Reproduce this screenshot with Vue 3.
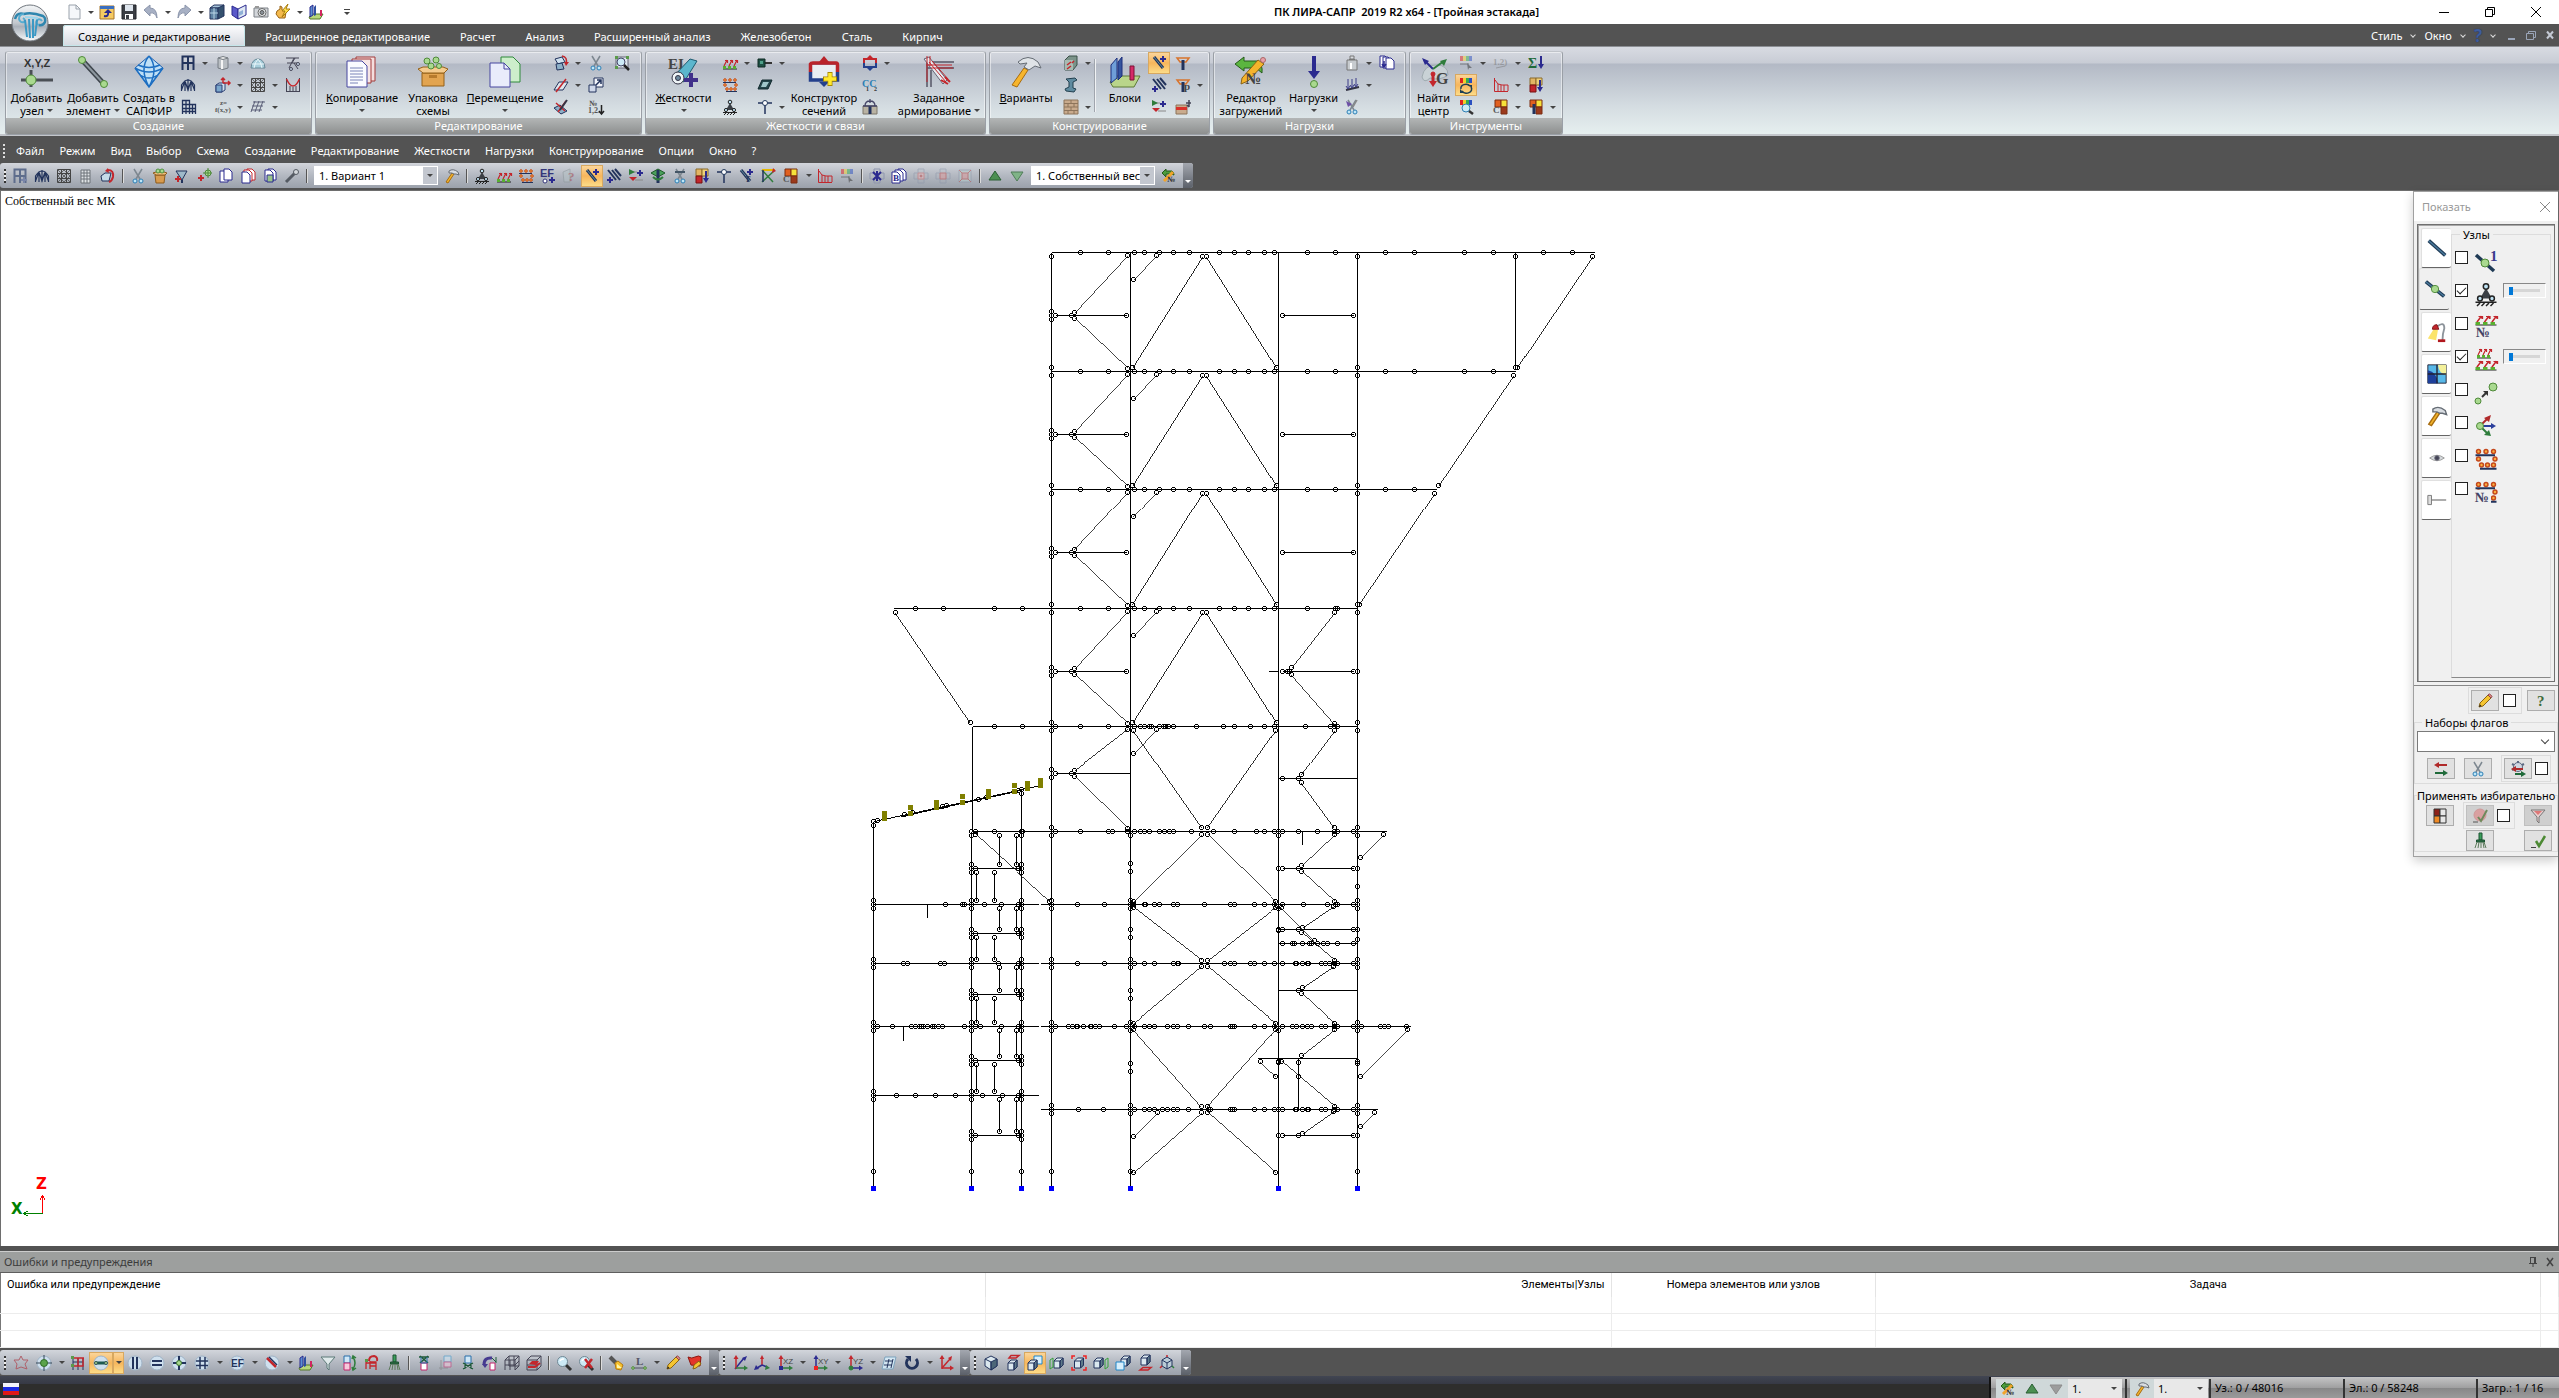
<template>
  <div class="app">
    <header class="titlebar">
      <div class="quick">
        <template v-for="(t, i) in quick" :key="i">
          <button class="tool" :title="t.id"><svg class="ico" viewBox="0 0 16 16" v-html="icons[t.id]"></svg></button>
          <button v-if="t.dd" class="dd" aria-label="Список"><i class="tri"></i></button>
        </template>
        <button class="dd more" aria-label="Настройка"><i class="bar"></i><i class="tri"></i></button>
      </div>
      <h1>ПК ЛИРА-САПР&nbsp; 2019 R2 x64 - [Тройная эстакада]</h1>
      <div class="winbtns">
        <button v-for="w in ['winMin', 'winMax', 'winClose']" :key="w" :aria-label="w">
          <svg class="ico" viewBox="0 0 16 16" v-html="icons[w]"></svg>
        </button>
      </div>
    </header>

    <button class="logo" aria-label="Меню">
      <svg viewBox="0 0 38 38">
        <defs>
          <linearGradient id="orb" x1="0" y1="0" x2="0" y2="1">
            <stop offset="0" stop-color="#f4f6f8" /><stop offset=".5" stop-color="#c3c8ce" />
            <stop offset=".6" stop-color="#aab1ba" /><stop offset="1" stop-color="#f8fafb" />
          </linearGradient>
        </defs>
        <circle cx="19" cy="19" r="18" fill="url(#orb)" stroke="#70767d" />
        <path d="M4 15Q6 8 13 10Q21 8 32 12Q35 14 34 18Q32 22 28 21" fill="none" stroke="#2f86ae" stroke-width="2.5" />
        <path d="M13 10Q8 10 8 15Q9 19 13 18Q15 16 12 14M28 21Q24 20 26 16Q29 14 31 17" fill="none" stroke="#56acd0" stroke-width="2" />
        <path d="M14 16L16 33M18 15L19 34M22 15L22 34M26 16L24 32" stroke="#3b98c4" stroke-width="2" />
        <path d="M14 13L27 14" stroke="#9ad6ec" stroke-width="2" />
      </svg>
    </button>

    <nav class="tabs">
      <button v-for="(t, i) in tabs" :key="t" :class="{ on: i === 0 }">{{ t }}</button>
      <div class="tabs-right">
        <button>Стиль <i class="chev"></i></button>
        <button>Окно <i class="chev wide"></i></button>
        <button class="help"><b>?</b> <i class="chev"></i></button>
        <button class="mdi" aria-label="Свернуть"><svg class="ico" viewBox="0 0 16 16" v-html="icons.mdiMin"></svg></button>
        <button class="mdi" aria-label="Восстановить"><svg class="ico" viewBox="0 0 16 16" v-html="icons.mdiMax"></svg></button>
        <button class="mdi" aria-label="Закрыть"><svg class="ico" viewBox="0 0 16 16" v-html="icons.mdiClose"></svg></button>
      </div>
    </nav>

    <div class="ribbon">
      <section v-for="g in groups" :key="g.name" class="group">
        <div class="group-body">
          <template v-for="(it, i) in g.items" :key="i">
            <i v-if="it.sep" class="gsep"></i>
            <button v-else-if="it.big" class="big" :style="{ width: it.w + 'px' }">
              <svg viewBox="0 0 32 32" v-html="icons[it.big]"></svg>
              <span v-for="(l, k) in it.text" :key="k"><u v-if="it.key && !k">{{ l[0] }}</u>{{ it.key && !k ? l.slice(1) : l }}<i v-if="it.dd === 'in' && k === it.text.length - 1" class="tri in"></i></span>
              <i v-if="it.dd === 'under'" class="tri under"></i>
            </button>
            <div v-else class="small" :style="{ gridTemplateColumns: it.cols.map(c => c + 'px').join(' ') }">
              <div v-for="(t, k) in it.tools" :key="k" class="cell">
                <button v-if="t.id" class="tool" :class="{ on: t.on, off: t.off }" :title="t.id">
                  <svg class="ico" viewBox="0 0 16 16" v-html="icons[t.id]"></svg>
                </button>
                <button v-if="t.dd" class="dd" aria-label="Список"><i class="tri"></i></button>
              </div>
            </div>
          </template>
        </div>
        <footer>{{ g.name }}</footer>
      </section>
    </div>

    <nav class="menubar">
      <i class="grip"></i>
      <button v-for="m in menus" :key="m">{{ m }}</button>
    </nav>

    <div class="bars">
      <div class="bar-strip">
        <i class="grip dark"></i>
        <template v-for="(t, i) in mainBar" :key="i">
          <i v-if="t.id === '|'" class="sep"></i>
          <span v-else-if="t.select" class="pick">
            <select :aria-label="t.select"><option>{{ t.select }}</option></select><i class="tri"></i>
          </span>
          <template v-else>
            <button class="tool" :class="{ on: t.on, off: t.off, split: t.dd }" :title="t.id">
              <svg class="ico" viewBox="0 0 16 16" v-html="icons[t.id]"></svg>
            </button>
            <button v-if="t.dd" class="dd" aria-label="Список"><i class="tri"></i></button>
          </template>
        </template>
        <i class="tail"><i class="tri"></i></i>
      </div>
    </div>

    <main class="canvas">
      <svg class="model" viewBox="1 191 2557 1053" preserveAspectRatio="xMinYMin meet" shape-rendering="crispEdges">
        <g transform="translate(.5 .5)" fill="none" stroke="#000">
          <line v-for="(l, i) in model.lines" :key="'l' + i" :x1="l[0]" :y1="l[1]" :x2="l[2]" :y2="l[3]" :stroke-width="thin(l)" />
          <circle v-for="(n, i) in model.nodes" :key="'n' + i" :cx="n[0]" :cy="n[1]" r="2" />
        </g>
        <rect v-for="(b, i) in model.loads" :key="'b' + i" :x="b[0]" :y="b[1]" width="5" :height="b[2]" fill="#808000" />
        <rect v-for="x in model.supports" :key="'s' + x" :x="x - 2" y="1186" width="5" height="5" fill="#00f" />
        <g fill="none" transform="translate(.5 .5)">
          <path d="M42 1213V1195M39 1200L42 1195L45 1200" stroke="red" />
          <path d="M42 1213H23M28 1210L23 1213L28 1216" stroke="green" />
        </g>
        <text x="36" y="1189" class="axis" fill="red">Z</text>
        <text x="11" y="1214" class="axis" fill="green">X</text>
      </svg>
      <span class="loadcase">Собственный вес МК</span>

      <aside class="panel">
        <header>Показать<button aria-label="Закрыть"><svg class="ico" viewBox="0 0 16 16"><path d="M3 3L13 13M13 3L3 13" stroke="#888" fill="none" /></svg></button></header>
        <div class="flags">
          <div class="side">
            <button v-for="(s, i) in sideTabs" :key="s" :class="{ on: i === 1 }" :title="s">
              <svg viewBox="0 0 24 24" v-html="icons[s]"></svg>
            </button>
          </div>
          <fieldset class="nodes">
            <legend>Узлы</legend>
            <div v-for="f in flags" :key="f.id" class="flag">
              <input :id="f.id" type="checkbox" v-model="f.on" />
              <label :for="f.id"><svg viewBox="0 0 24 24" v-html="icons[f.id]"></svg></label>
              <input v-if="f.slider" type="range" min="0" max="100" value="0" :aria-label="f.id" />
            </div>
          </fieldset>
        </div>
        <div class="prow top">
          <div class="box"><button class="pb"><svg viewBox="0 0 16 16" v-html="icons.pencil"></svg></button><input type="checkbox" aria-label="Правка" /></div>
          <button class="pb"><svg viewBox="0 0 16 16" v-html="icons.ask"></svg></button>
        </div>
        <fieldset class="sets">
          <legend>Наборы флагов</legend>
          <span class="combo"><select aria-label="Наборы флагов"><option></option></select><i class="chev ink"></i></span>
          <div class="prow">
            <button class="pb"><svg viewBox="0 0 16 16" v-html="icons.swap"></svg></button>
            <button class="pb"><svg viewBox="0 0 16 16" v-html="icons.cut"></svg></button>
            <div class="box"><button class="pb"><svg viewBox="0 0 16 16" v-html="icons.gearSwap"></svg></button><input type="checkbox" aria-label="Авто" /></div>
          </div>
        </fieldset>
        <fieldset class="apply">
          <legend>Применять избирательно</legend>
          <div class="agrid">
            <button class="pb"><svg viewBox="0 0 16 16" v-html="icons.tiles"></svg></button>
            <div class="box"><button class="pb dim"><svg viewBox="0 0 16 16" v-html="icons.redCheck"></svg></button><input type="checkbox" aria-label="Применять" /></div>
            <button class="pb dim"><svg viewBox="0 0 16 16" v-html="icons.funnelRed"></svg></button>
            <span></span>
            <button class="pb"><svg viewBox="0 0 16 16" v-html="icons.brush"></svg></button>
            <button class="pb"><svg viewBox="0 0 16 16" v-html="icons.check"></svg></button>
          </div>
        </fieldset>
      </aside>
    </main>

    <section class="errors">
      <header>
        <span>Ошибки и предупреждения</span>
        <button aria-label="Закрепить"><svg class="ico" viewBox="0 0 16 16"><path d="M5.5 3V9M10.5 3V9M5.5 3.5H10.5M9.5 3V9M4 9.5H12M8 9.5V13" stroke="#444" fill="none" /></svg></button>
        <button aria-label="Закрыть"><svg class="ico" viewBox="0 0 16 16"><path d="M5 4L11 12M11 4L5 12" stroke="#444" stroke-width="1.5" fill="none" /></svg></button>
      </header>
      <table>
        <colgroup><col class="c1" /><col class="c2" /><col class="c3" /><col class="c4" /><col /></colgroup>
        <thead>
          <tr><th class="l">Ошибка или предупреждение</th><th class="r">Элементы|Узлы</th><th>Номера элементов или узлов</th><th>Задача</th><th></th></tr>
        </thead>
        <tbody>
          <tr v-for="n in 3" :key="n"><td v-for="k in 5" :key="k"></td></tr>
        </tbody>
      </table>
    </section>

    <div class="bars bottom">
      <div v-for="(b, j) in bottomBars" :key="j" class="bar-strip">
        <i class="grip dark"></i>
        <template v-for="(t, i) in b" :key="i">
          <i v-if="t.id === '|'" class="sep"></i>
          <template v-else>
            <button class="tool" :class="{ on: t.on, off: t.off, split: t.dd }" :title="t.id">
              <svg class="ico" viewBox="0 0 16 16" v-html="icons[t.id]"></svg>
            </button>
            <button v-if="t.dd" class="dd" :class="{ on: t.on }" aria-label="Список"><i class="tri"></i></button>
          </template>
        </template>
        <i class="tail"><i class="tri"></i></i>
      </div>
    </div>

    <footer class="status">
      <svg class="flag-ru" viewBox="0 0 16 12"><path d="M0 0H16V4H0Z" fill="#f4f4fa" /><path d="M0 4H16V8H0Z" fill="#1c2be0" /><path d="M0 8H16V12H0Z" fill="#e01818" /></svg>
      <div class="cells">
        <button v-for="s in ['loadEdit', 'up', 'downGray']" :key="s" :title="s"><svg class="ico" viewBox="0 0 16 16" v-html="icons[s]"></svg></button>
        <span class="pick"><select aria-label="Загружение"><option>1.</option></select><i class="tri"></i></span>
        <i class="cut"></i>
        <button title="Вариант"><svg class="ico" viewBox="0 0 16 16" v-html="icons.hammer"></svg></button>
        <span class="pick"><select aria-label="Вариант"><option>1.</option></select><i class="tri"></i></span>
        <span class="info">Уз.: 0 / 48016</span>
        <span class="info">Эл.: 0 / 58248</span>
        <span class="info last">Загр.: 1 / 16</span>
      </div>
    </footer>
  </div>
</template>

<script setup>
import { reactive } from 'vue'

// svg helpers: s - stroked path, f - filled path, c - circle, t - label
const s = (d, col = '#22395c', w = 1) => `<path d="${d}" fill="none" stroke="${col}" stroke-width="${w}"/>`
const f = (d, col, st) => `<path d="${d}" fill="${col}"${st ? ` stroke="${st}"` : ''}/>`
const c = (x, y, r, col = 'none', st = '#22395c') => `<circle cx="${x}" cy="${y}" r="${r}" fill="${col}" stroke="${st}"/>`
const t = (x, y, txt, size, col = '#333', fam = 'Liberation Serif', w = 'bold') =>
  `<text x="${x}" y="${y}" font-size="${size}" fill="${col}" font-family="${fam}, serif" font-weight="${w}">${txt}</text>`
const g = (tr, body) => `<g transform="${tr}">${body}</g>`

const NAVY = '#22335c', BLUE = '#2b2a8f', RED = '#c3262c', GRN = '#2f7d3c', LG = '#a9d98f'
const plus = (x, y, col = BLUE) => s(`M${x - 3} ${y}H${x + 3}M${x} ${y - 3}V${y + 3}`, col, 2)
const page = (x, y, col = BLUE) => f(`M${x} ${y}h5l3 3v8h-8z`, '#fff', col)
const cut = s('M4 1L10 11M12 1L6 11', '#7d8790', 1.5) + c(5, 13, 2, '#bfe6f7', '#2d7fb5') + c(11, 13, 2, '#bfe6f7', '#2d7fb5')
const pencil = f('M2 14L3 10L11 2L14 5L6 13Z', '#f5c531', '#8a6314') + f('M11 2L12.5 .8L15 3.3L14 5Z', '#e58b8b', '#8d4646') + f('M2 14L3 11.5L4.5 13Z', '#222')
const hammer = f('M2 14L8 5L10 6L4 15Z', '#f2b32b', '#a76c10') + f('M5 3Q9 0 14 4L15 7L12 6L10 6L8 5L5 5Z', '#d9dde2', '#666d75')
const disc = body => c(8, 8, 7, '#cfe0ee', '#9fb3c6') + body
const frame = (col = NAVY) => s('M2.5 15V1.5H13.5V15M2.5 8H13.5M8 1.5V15', col, 2)
const arch = s('M1.5 14V8Q8 -2 14.5 8V14M5 14V4L1.5 13M5 4L8 13L11 4V14M11 4L14.5 13M8 2V14', NAVY, 1.2)
const mesh = s('M1.5 1.5H14.5V14.5H1.5ZM1 5.5H15M1 10.5H15M5.5 1V15M10.5 1V15', '#444') + s('M2 2L14 14M14 2L2 14M8 2L2 8L8 14L14 8Z', '#444', .7)
const parcel = f('M3 7H13L12 15H4Z', '#d89b4e', '#8d5c1f') + f('M1 5L4 7H13L15 5L12 4H4Z', '#eebd7c', '#8d5c1f') + c(6, 3, 2, LG, '#4f9140') + c(10, 3, 2, LG, '#4f9140')
const springs = s('M1 14H15', '#222') + f('M1 11h3v3h-3zM6 11h3v3h-3zM11 11h3v3h-3z', '#58b030') + s('M2 11L5 5M7 11L10 5M12 11L15 5M3 5.5H5.5V8M8 5.5H10.5V8M13 5.5H15.5V8', RED, 1.2)
const dot = (x, y) => c(x, y, 1.3, '#fbb040', '#c4481c')
const dots = [3, 8, 13].map(x => dot(x, 3)).join('') + [5, 9, 13].map(x => dot(x, 12)).join('') + dot(3, 8) + dot(14, 8) + s('M1 5.5H14M4 14.5H15', NAVY, 1.2)
const support = f('M8 4L4 11H12Z', '#3a3f45') + c(8, 3, 1.8, '#bfe2f3', '#222') + c(4, 11, 1.6, '#bfe2f3', '#222') + c(12, 11, 1.6, '#bfe2f3', '#222') + s('M1 13.5H15', '#222') + s('M2 16L4 14M5 16L7 14M8 16L10 14M11 16L13 14', '#222')
const wand = s('M3 2L12 13', NAVY, 3) + s('M3 2L12 13', '#5e8d9b', 1) + plus(12, 4)
const ropes = s('M2 2L10 12M6 2L14 12M9 1L15 8', NAVY, 2) + plus(4, 12)
const releases = s('M2 4H9M7 12H15', '#888') + f('M1 1L7 4L1 7Z', GRN) + f('M9 9H1L5 13Z', RED) + plus(12, 5)
const hinge = s('M1 4H15M8 6V15', NAVY, 1.5) + c(8, 4, 2.5, '#fff')
const tee = s('M2 3H14L11 7H5Z', '#d8742d', 1.5) + s('M8 5V15', NAVY, 3)
const palette = x => f(`M${x} 1h3v5h-3z`, '#d22') + f(`M${x + 3} 1h3v5h-3z`, '#f2cf2b') + f(`M${x + 6} 1h3v5h-3z`, '#36a852') + f(`M${x + 9} 1h3v5h-3z`, '#2a4fc0')
const quad = f('M2 1H8V8H2Z', '#e06020', '#7a2d10') + f('M8 1H14V8H8Z', '#f6e23a', '#7a2d10') + f('M8 8H14V15H8Z', '#9b3a1c', '#7a2d10')
const hist = s('M1.5 1V14.5H15', RED) + s('M2 3L5 7L9 8H15V14M5 7V14M8 8V14M11 8V14', RED)
const loadEdit = f('M1 5L5 1V3H11Q13 4 13 7L10 6H5V9Z', '#4c9c3c', '#255b1b') + s('M3 13L12 4', '#f1a42a', 3) + t(6, 14, '№', 8, '#333')
const tilesDown = f('M2 1H8V8H2Z', '#e3b564', '#8a6a2a') + f('M8 1H14V8H8Z', '#eed07a', '#8a6a2a') + f('M2 8H8V15H2Z', RED, '#711') + s('M12 3V12', BLUE, 2) + f('M9 10H15L12 15Z', BLUE)
const mag = s('M10 10L15 15', '#333', 3) + c(6.5, 6.5, 5, '#cdeaf6', '#6f8794') + s('M4 6Q5 3.5 8 4', '#fff', 1.5)
const box3 = (x, y) => f(`M${x} ${y + 3}l3-3h6v7l-3 3h-6z`, '#dbe8ef', NAVY) + f(`M${x + 6} ${y + 3}l3-3v7l-3 3z`, '#5d7a8a', NAVY) + s(`M${x} ${y + 3}h6v7`, NAVY)
const axes = (a, b, l) => s('M4 14V3', a, 1.5) + f('M4 0L1.5 4H6.5Z', a) + s('M4 13H13', b, 1.5) + f('M16 13L12 10.5V15.5Z', b) + (l ? t(6, 9, l, 8, '#444', 'Liberation Sans', 'normal') : '')
const ghost = (col, m) => s('M5 1H11V5H15V11H11V15H5V11H1V5H5Z', '#8a93a8', 1) + f('M5 5H11V11H5Z', m, col)

const icons = {
  new: f('M3 1H10L14 5V15H3Z', '#f5f7fa', '#9aa2ab') + s('M10 1V5H14', '#9aa2ab'),
  open: f('M1 2H15V15H1Z', '#f6ca62', '#a5752a') + f('M1 2H15V5H1Z', '#3a6fc0') + s('M5 12Q10 13 9 8', BLUE, 2) + f('M5 9H13L9 5Z', BLUE),
  save: f('M1 1H15V15H1Z', '#3b3e44', '#22252a') + f('M4 1H12V7H4Z', '#dfe6ee') + f('M4 10H12V15H4Z', '#fff') + f('M5 11H8V15H5Z', '#3b3e44'),
  undo: f('M1 6L7 1V4Q14 4 14 14Q12 8 7 9V12Z', '#a7b0c4', '#8b95ab'),
  redo: f('M15 6L9 1V4Q2 4 2 14Q4 8 9 9V12Z', '#a7b0c4', '#8b95ab'),
  cube3d: f('M1 4L5 1H15L11 4Z', '#a7c5da', NAVY) + f('M1 4H9V15H1Z', '#5e83a3', NAVY) + f('M9 4L15 1V12L9 15Z', '#34516f', NAVY) + s('M5 4V15M1 9H9', '#b9d5e6'),
  book: f('M1 2L7 5V15L1 11Z', '#5a59c9', BLUE) + f('M7 5L15 1V11L7 15Z', '#dfe8f4', BLUE) + f('M8 8L12 6V10L8 12Z', '#8fb0d6'),
  camera: f('M1 4H15V13H1Z', '#d3d6da', '#7c8187') + c(9, 8.5, 4, '#eef1f3', '#666') + c(9, 8.5, 2, '#8a9298', '#555') + f('M2 2H6V4H2Z', '#999'),
  bolt: f('M2 7L5 5V2L7 3V6L11 8L10 14H4L1 10Z', '#f4b94c', '#9a6516') + f('M13 0L7 7H10L7 13L15 5H11Z', '#ffe04a', '#a97c10'),
  columns: f('M1 13L5 10H15L12 15H2Z', '#b7d77a', '#56782a') + f('M2 3L5 1V11L2 13Z', '#5b8fd0', BLUE) + f('M6 3L8 1V11L6 12Z', '#2f4fa0') + f('M12 6H14V12H12Z', '#d22560'),
  winMin: s('M3 8.5H13', '#000'), winMax: s('M3.5 5.5H10.5V12.5H3.5ZM5.5 5V3.5H12.5V10.5H11', '#000'), winClose: s('M3 3L13 13M13 3L3 13', '#000'),
  mdiMin: s('M4 12H11', '#9aa5b8', 2), mdiMax: s('M3.5 6.5H10.5V12.5H3.5ZM5.5 6V4.5H12.5V10.5H11', '#9aa5b8'), mdiClose: s('M5 4.5L11 11.5M11 4.5L5 11.5', '#c3c9d4', 2),

  addNode: t(3, 11, 'X,Y,Z', 11, '#333', 'Liberation Sans') + s('M0 24H32', '#4a4f55', 3) + s('M10 14V31', '#4a4f55', 3) + c(10, 24, 5, LG, '#4f8a3a'),
  addElem: s('M5 4L27 28', '#3d444b', 5) + s('M5 4L27 28', '#8d979f', 2) + c(5, 4, 3.5, LG, '#4f8a3a') + c(27, 28, 3.5, LG, '#4f8a3a'),
  sapfir: f('M16 0L30 12L16 31L2 12Z', '#bfe0f7', '#1e5fae') + s('M2 12Q16 20 30 12M5 9Q16 14 27 9M16 0Q6 12 16 31M16 0Q26 12 16 31M7 19Q16 25 25 19M2 12L16 31L30 12', '#1e6fc2', 1.5),
  copyBig: f('M10 1H29V25H10Z', '#f4dede', '#a23b3b') + f('M6 3H25V27H6Z', '#f7e6e6', '#a23b3b') + f('M1 5H16L21 10V31H1Z', '#fafbff', '#4747a0') + s('M4 12H17M4 15H17M4 18H17M4 21H17M4 24H17M4 27H12', '#7a84b8'),
  packBig: f('M5 17H27V30H5Z', '#e2a450', '#946019') + f('M1 13L6 17H27L31 13L26 11H6Z', '#f5cb8d', '#946019') + c(10, 5, 3, LG, '#4f8a3a') + c(19, 4, 3, LG, '#4f8a3a') + c(14, 10, 3, LG, '#4f8a3a') + c(22, 10, 2.5, LG, '#4f8a3a') + f('M12 19H20V22H12Z', '#b77a2c'),
  moveBig: f('M12 1H24L31 8V26H12Z', '#cdeecb', '#2f8a3a') + f('M1 7H15L21 13V31H1Z', '#e9ecfb', '#4747a0') + s('M15 7V13H21', '#4747a0'),
  stiff: t(0, 13, 'EI', 15, '#444') + f('M6 20L22 3L29 5L16 26Z', '#5cb6cd', '#1f5b70') + c(10, 22, 6, '#eef4f7', '#334') + c(10, 22, 2.5, '#6d8aa0', '#334') + s('M23 17V31M16 24H30', '#40308a', 4),
  section: f('M3 8H29V24H3Z', '#e9edf2', '#2c3f8c') + s('M2.5 16V8Q3 7 5 7H28Q29.5 7 29.5 9V16', '#b9232a', 3.5) + s('M2.5 16V24H29.5V16', '#24408c', 3.5) + f('M11 6L16 0L21 6Z', '#b9232a') + f('M11 26H21L16 31Z', '#24408c') + s('M22 16V30M15 23H29', '#a88a00', 5) + s('M22 17V29M16 23H28', '#ffe92e', 3.5),
  rebarSet: s('M4 31V6H31M8 31V14M4 12H31', '#556', 1.5) + f('M1 3L6 1L24 24L20 28Z', '#e6e9ee', '#667') + s('M4 0V26M7 0V10M3 9H29M8 12H30', RED, 1) + s('M6 6L23 26M9 5L25 23', RED, 1) + s('M18 24L25 28M22 21L27 26', RED, 2),
  hammerBig: f('M2 29L14 12L18 14L7 31Z', '#f7b52c', '#a76c10') + f('M8 6Q18 -3 28 6L31 12L25 10L19 14L14 11L17 7L10 8Z', '#dfe3e7', '#666d75'),
  blocks: f('M1 26L8 20H31L25 31H4Z', '#b9d58a', '#5d7a36') + f('M2 9L8 2V22L2 27Z', '#6f9fd8', '#1d2f7c') + f('M9 6L13 1V20L9 24Z', '#35549e', '#1d2f7c') + f('M21 10H25V24H21Z', '#d52b68', '#7c1237'),
  loadEditBig: f('M0 8L9 1V5H22Q28 8 27 17L21 12H9V15Z', '#5bb53f', '#255b1b') + f('M6 28L7 22L23 4L29 8L13 25Z', '#f5b42b', '#8a6314') + c(28, 4, 2.5, '#e9a0a8', '#a66') + t(10, 28, '№', 16, '#444'),
  loads: s('M16 0V18', BLUE, 4) + f('M10 15H22L16 23Z', BLUE) + c(16, 28, 3.5, LG, '#4f8a3a'),
  centre: f('M4 21Q6 9 18 9Q30 9 30 19Q22 25 12 22Q6 28 4 21Z', '#c9d2d6', '#a0abb0') + s('M15 13L6 4', BLUE, 2) + f('M4 2L11 5L7 9Z', BLUE) + s('M15 13L26 5', GRN, 2) + f('M29 3L26 10L22 5Z', GRN) + s('M15 17V27', RED, 3) + f('M11 25H19L15 31Z', RED) + c(15, 18, 2, RED, RED) + t(18, 28, 'G', 16, '#444'),

  frame: frame(), arch, mesh, parcel, springs, dots, support, wand, ropes, releases, hinge, tee, hist, loadEdit, cut, pencil, hammer,
  tiles: f('M2 1H8V8H2Z', '#8d2018', '#333') + f('M8 1H14V8H8Z', '#e8e8e8', '#333') + f('M2 8H8V15H2Z', '#f08a24', '#333') + f('M8 8H14V15H8Z', '#e8e8e8', '#333'),
  building: s('M2.5 15V1.5H9.5V15M2.5 5.5H15.5V15M2.5 9.5H15M6 1V15M12.5 5V15M2 12.5H15', NAVY, 1.3),
  cylinder: f('M3 3V13Q8 16 13 13V3Z', '#b9bec3', '#777d84') + f('M3 3Q8 0 13 3Q8 6 3 3Z', '#eee', '#777d84') + f('M6 5H8V14H6Z', '#f4f4f4'),
  dome: f('M1 13Q2 4 8 4Q14 4 15 13Z', '#a9cfdc', '#688a98') + s('M4 13Q5 7 8 4Q11 7 12 13M2 9H14', '#e9f6fa'),
  truss: s('M1 3H14M2 8H12M4 13L9 3M7 8L10 3M9 8L13 14', '#445') + c(13, 9, 1.5, '#cde', '#445') + c(6, 14, 1.5, '#cde', '#445'),
  cubeMove: f('M1 8L4 6H10V13L7 15H1Z', '#cfe0ee', '#2b3f74') + f('M1 8H7V15H1Z', '#7ba7cc', '#2b3f74') + s('M8 6V1M8 6H15M6 3L8 1L10 3M13 4L15 6L13 8', RED, 1.5),
  fxy: t(5, 6, 'z=', 7, '#555') + t(0, 13, 'f(x,y)', 7, '#555'),
  cable: s('M1.5 1V15M14.5 1V15M1 14.5H15M5 9V14M8 10V14M11 9V14', '#445') + s('M1.5 2Q8 16 14.5 2', RED, 1.5),
  plane: s('M3 3H15M2 7H13M1 11H12M5 2L1 13M9 2L5 13M13 2L9 13', '#5b5f78'),
  rotate: f('M2 4L9 2L12 7L5 9Z', '#cfe0ee', NAVY) + f('M3 9L9 8L11 14L4 15Z', '#8db0c8', NAVY) + s('M9 1Q15 2 13 9', RED, 1.5) + f('M11 7H16L13 11Z', RED),
  mirror: f('M1 13L6 5H15L10 13Z', '#dfe7ee', NAVY) + s('M3 15L13 2', RED, 1.5),
  slice: f('M1 9L7 6L14 12L8 15Z', '#8db0c8', NAVY) + s('M13 2L5 13M3 4L12 12', RED, 1.5) + s('M14 1L7 11', '#334', 2),
  zoomNodes: f('M2 2H14V13H2Z', '#dfe7ee', '#667') + c(7, 7, 4, '#cdeaf6', '#446') + s('M10 10L15 15', '#222', 2.5) + f('M1 1h3v3h-3zM12 1h3v3h-3zM1 11h3v3h-3z', '#5b9a4a'),
  scale: f('M6 1H15V10H6Z', '#f2f4fa', NAVY) + f('M1 8H8V15H1Z', '#cfd8ea', NAVY) + s('M8 8L13 3M9 3H13V7', NAVY, 1.5),
  renum: t(1, 7, '№', 8, '#555') + t(0, 14, '1,2..', 8, '#555') + s('M13.5 6V14M11 12L13.5 15L16 12', '#222', 1.5),
  block: s('M7 8H15', '#333', 2) + f('M1 4H8V12H1Z', '#1e5145', '#0f2a24') + f('M3 6h3v3h-3z', '#4fa08a'),
  plate: f('M5 3H15L11 12H1Z', '#23454a', '#122a2e') + f('M6 5H12L9 10H4Z', '#9fc6c9'),
  rectSec: s('M2 8V4H14V8', RED, 2) + s('M2 8V12H14V8', '#24408c', 2) + f('M5 3L8 0L11 3Z', RED) + f('M5 13H11L8 16Z', '#24408c'),
  cc: t(0, 10, 'CC', 10, '#2c7fb5') + t(4, 14, '1', 6, '#333') + t(12, 14, '2', 6, '#333'),
  soil: f('M1 7H15V15H1Z', '#b9b3a3', '#7c776a') + s('M8 7V15', NAVY, 3) + s('M3 7Q3 2 8 2Q13 2 13 7M1 7H15M8 0V4', '#446', 1.3),
  rebarBox: f('M2 5L6 1H14V10L10 15H2Z', '#7b9389', '#3b5048') + f('M2 5H10V15H2Z', '#a7bbb2') + s('M4 10L8 7M4 14L8 11M9 8L11 6', RED, 1.5),
  ibeam: f('M3 2L12 1L14 3L10 5V11L13 12L11 15L3 14L2 12L6 10V5Z', '#5f8ba0', '#23404f'),
  brick: f('M1 1H15V15H1Z', '#c9ab8d', '#8d745b') + s('M1 4.5H15M1 8H15M1 11.5H15M8 1V4.5M5 4.5V8M11 4.5V8M8 8V11.5M5 11.5V15M11 11.5V15', '#8d745b'),
  teeP: tee + t(9, 13, 'p', 11, '#444'),
  brickLoad: f('M1 6H12V15H1Z', '#c9ab8d', '#8d745b') + f('M1 8H12V11H1Z', '#d8332c') + s('M14 1V8M11 4H16M14 8L12 6', '#445', 1.5),
  weight: f('M6 1H10V4H6Z', '#d8dbdf', '#777') + f('M3 5H13V15H3Z', '#c7cbcf', '#777') + f('M6 8H8V14H6Z', '#fff') + s('M5 4.5H11', '#777'),
  loadLine: s('M2 13L15 10', '#334', 2) + s('M4 2V11M8 2V10M12 1V9M2 9L4 12L6 9M6 8L8 11L10 8M10 7L12 10L14 7', '#3a3a88'),
  cutLoad: cut + f('M2 2L8 5L4 8Z', '#6d50a5') + s('M13 1L9 8', '#888', 1.5),
  copyLoad: page(1, 1) + page(4, 2) + page(7, 3) + s('M5 6V11M3 9L5 12L7 9', BLUE, 1.5),
  palPick: palette(2) + s('M2 9H11', '#333', 1) + f('M9 8L14 13L11 13L10 15Z', '#333'),
  palCycle: palette(2) + s('M3 12A5 4 0 0 1 12 9M13 10A5 4 0 0 1 4 14', '#1d3f55', 1.5) + f('M10 8H14V11ZM6 16H2V12Z', '#1d3f55'),
  palZoom: palette(2) + c(8, 9, 4, '#cdeaf6', '#2d7fb5') + s('M11 12L15 15', '#333', 2.5),
  frac: t(0, 10, '1.2)', 9, '#777') + s('M3 13L12 11', '#777'),
  sigma: t(0, 13, 'Σ', 14, '#1f6a3a') + s('M13 1V10', BLUE, 2) + f('M10 9H16L13 14Z', BLUE),
  tilesDown, tilesC: quad + t(0, 14, 'C', 9, '#555'), tilesPen: quad + s('M6 5V15', NAVY, 3),

  frameP: frame('#5e6d8c') + plus(12, 12, '#7a86a8'),
  cyl2: f('M3 2H12V15H3Z', '#dfe3e6', '#6c7278') + s('M3 5H12M3 8H12M3 11H12M6 2V15M9 2V15', '#6c7278'),
  unroll: f('M1 8L5 5H11L9 13H2Z', '#c6dbe8', NAVY) + s('M8 2Q14 2 13 9Q12 13 9 14', RED, 2) + f('M8 0L5 3L9 5Z', RED),
  triPlus: f('M2 3H13L8 12Z', '#9fb9c9', NAVY) + s('M8 12V15', NAVY, 2) + plus(4, 11, RED),
  nodePlus: c(12, 5, 3, LG, '#4f8a3a') + s('M12 0V10M7 5H16', '#4f8a3a') + plus(5, 10, RED),
  pages: page(2, 3) + page(6, 1), pagesR: page(7, 1, RED) + page(4, 2, RED) + page(2, 4),
  pagesM: page(6, 1) + page(3, 2) + f('M5 7h6v7h-6z', '#9ac48a', BLUE),
  wrench: s('M2 14L11 5', '#555b63', 3) + c(12, 4, 2.5, '#d4d8dc', '#555b63'),
  efp: t(0, 9, 'EF', 11, '#33367a', 'Liberation Sans') + c(5, 13, 2, '#fff', '#33367a') + plus(12, 12),
  ask2: f('M1 4L8 1V14H2Z', '#b6c2c6', '#8a9598') + t(6, 13, '?', 13, '#a3444c'),
  layers: f('M8 1L15 5L8 9L1 5Z', '#4aa05a', '#1e5a2a') + s('M8 2V15', NAVY, 3) + s('M3 9Q8 14 13 9', GRN, 2),
  cutNode: cut + s('M3 4H13', '#456', 2), wandT: wand + t(7, 14, 'T', 8, NAVY),
  fan: s('M2 14L14 3M2 2L13 14', GRN, 1.5) + s('M2 2H14V3', '#e5b800', 2) + f('M13 0L16 3L12 5Z', RED) + s('M3 2V14', NAVY, 1.5),
  cross: s('M5 1H11V5H15V11H11V15H5V11H1V5H5Z', '#8f96ae') + s('M4 4L12 12M12 4L4 12M8 3V13', BLUE, 2),
  pageB: page(7, 1) + page(4, 2) + page(1, 4) + t(2, 13, 'B', 9, BLUE),
  ghost1: ghost('#c66', '#e9b9bd') + c(8, 8, 1, '#b44', '#b44'), ghost2: ghost('#b44', '#d99'), ghost3: f('M2 2H14V14H2Z', '#b9d0cd', '#8a93a8') + f('M5 5H11V11H5Z', '#d99', '#b44') + s('M2 2L5 5M14 2L11 5M2 14L5 11M14 14L11 11', '#b44'),
  up: f('M8 3L14 12H2Z', '#4c8f52', '#2a5f33'), down: f('M8 13L14 4H2Z', '#7fb387', '#4f7c58'), downGray: f('M8 13L14 4H2Z', '#9c9c9c', '#8c8c8c'),

  star: s('M8 1L10 5L15 5L12 9L14 14L8 12L3 14L4 9L1 5L6 5Z', '#b0606a', 1),
  dNode: disc(c(8, 8, 3.5, '#5ba34a', '#2d6a24') + s('M8 0V4M8 12V16M0 8H4M12 8H16', '#345')),
  netRed: s('M3 15V3M8 15V3M13 15V3M3 7H13', NAVY) + s('M2 3H14M8 3V11M3 11H13V3', RED, 1.5) + f('M1 1h3v3h-3zM1 9h3v3h-3z', '#5b9a4a'),
  dBeam: disc(s('M2 8H14', '#1f5a50', 3) + c(3, 8, 1.5, LG, '#355') + c(13, 8, 1.5, LG, '#355')),
  dVert: disc(s('M6 2V14M10 2V14', NAVY, 2)), dHor: disc(s('M3 6H13M3 10H13', NAVY, 2)),
  dRot: disc(c(8, 8, 2.5, LG, '#2d6a24') + s('M8 1V5M8 11V15M2 8H5M11 8H15', NAVY, 2)),
  dGrid: disc(s('M6 2V14M11 2V14M2 6H14M2 10.5H14', NAVY, 1.5)),
  dEF: disc(t(2, 12, 'EF', 10, '#22335c', 'Liberation Sans')), dPen: disc(s('M3 3L12 12', RED, 2.5) + s('M5 2L13 10', NAVY, 1.5)),
  funnel: f('M1 2H15L9 9V15L7 13V9Z', '#dfe9ea', '#5d7a78'), funnelRed: f('M1 2H15L9 9V15L7 13V9Z', '#e8d0d0', '#777') + f('M4 3H12L8 7Z', '#d77'),
  flip: f('M2 1H8V8H2Z', '#cfe7f7', '#2b6fa8') + f('M2 8H8V15H2Z', '#f6c9dc', '#c4246c') + s('M11 2Q15 8 11 14M10 4L11 1L14 3M10 12L11 15L14 13', GRN, 1.5),
  netHook: s('M2 14V6M6 14V6M12 15V7H6M2 8H12M6 11H12', RED, 1.3) + s('M5 6Q5 1 10 1Q14 2 13 6', RED, 2) + f('M1 4h3v3h-3z', '#5b9a4a'),
  brush: f('M7 0H10V7H7Z', '#3a9f5a', '#1c5232') + f('M4.5 7H12.5V9H4.500Z', '#2c6f45', '#1c5232') + s('M5 9L3 15M7 9L6 15M9 9V15M11 9L12 15M12 9L14 15', '#5b7a5a'),
  fragX: s('M3 2H13M4 1L12 8M12 1L4 8', '#1f5a3a', 1.5) + f('M5 8H11V15H5Z', '#fff', '#c4246c') + s('M5 2V8H11V2', '#2b6fa8'),
  fragD: s('M1 13H10M3 15V5', '#777') + f('M6 1H13V7H6Z', '#cfe7f7', '#2b8fc8') + f('M6 7H13V12H6Z', '#f6c9dc', '#c4246c'),
  fragDn: f('M5 1H11V8H5Z', '#cfe7f7', '#2b6fa8') + s('M3 8L13 14M13 8L3 14M5 8V14M11 8V14', '#1f5a3a', 1.2),
  fragRot: s('M2 10Q2 2 10 3', '#463a90', 3) + f('M0 9H6L3 13Z', '#463a90') + f('M8 8H13V15H8Z', '#fff', '#c4246c') + s('M10 3L14 7M14 2V8', '#1f5a3a'),
  cage: s('M1 5H11V15M1 5V15M1 10H11M6 5V15M1 5L5 1H15V11L11 15M11 5L15 1M11 10L15 6M5 1V11H15M10 1V11', '#445'),
  cageRed: s('M1 5H11V15H1ZM5 1H15V11L11 15M1 5L5 1M11 5L15 1M1 10H11', '#445') + f('M3 9L6 6H13L10 10Z', RED) + s('M2 12H9L14 8', RED, 2),
  mag, magX: mag + s('M7 4L14 13M14 4L7 13', RED, 2.5),
  torch: s('M2 2L8 8', '#555', 4) + f('M7 8L10 6L15 10L13 15L8 14Z', '#f7c22e', '#b47a12') + f('M9 9L14 13L9 13Z', '#fff6a8'),
  len: t(5, 10, 'L', 11, '#556') + s('M2 13H14', '#556') + c(2, 13, 1.3, LG, '#4f8a3a') + c(14, 13, 1.3, LG, '#4f8a3a'),
  markRed: f('M1 2Q5 4 8 2Q12 0 14 2L13 11L4 10Z', '#e3352b', '#8d1711') + f('M6 14L7 10L12 6L14 9L9 13Z', '#f5c531', '#8a6314'),
  ax1: s('M3 14L12 3', BLUE, 1.5) + f('M15 1L13 6L10 3Z', BLUE) + axes(RED, GRN),
  ax2: s('M8 10V2', RED, 1.5) + f('M8 0L6 4H10Z', RED) + s('M8 10L3 13M8 10L13 12', BLUE, 1.5) + f('M0 15L2 10L5 14Z', BLUE) + f('M16 13L12 10L11 15Z', GRN),
  axXZ: axes(RED, GRN, 'XZ') + f('M2 11h4v4h-4z', BLUE), axXY: axes(BLUE, GRN, 'XY') + f('M2 11h4v4h-4z', '#e22'), axYZ: axes(RED, BLUE, 'YZ') + c(4, 13, 2, GRN, GRN),
  planeB: f('M4 2H15L12 14H1Z', '#d3e6f2', '#7da3bd') + s('M4 6H12M3 10H11M8 4L6 13M12 4L10 13', NAVY),
  cw: s('M4 4A5.5 5.5 0 1 0 12 4', NAVY, 3) + f('M1 1H7V7Z', NAVY), ax3: axes(RED, RED) + s('M4 13L12 4', RED, 1.5) + f('M14 1L13 6L10 3Z', RED),
  iso: f('M2 4L8 1L14 4V11L8 15L2 11Z', '#dbe8ef', NAVY) + f('M8 7L14 4V11L8 15Z', '#4c6678', NAVY) + s('M2 4L8 7V15', NAVY),
  bTop: box3(3, 5) + s('M4 3L6 .5H14L11 3Z', RED, 1.5), bBack: f('M7 1H15V9H7Z', '#d8effc', '#1f86c8') + box3(1, 5), bLeft: box3(5, 3) + s('M1 5V14L4 12V3Z', '#36a23a'),
  bFrame: box3(3.5, 3) + s('M1 4V1H4M12 1H15V4M15 12V15H12M4 15H1V12', '#e22', 1.5), bRight: box3(1, 3) + s('M12 5V14L15 12V3Z', '#36a23a'),
  bFront: box3(6, 1) + f('M1 7H9V15H1Z', '#d8effc', '#1f86c8'), bBottom: box3(4, 0) + s('M3 15L6 12.5H14L11 15Z', RED, 1.5),
  isoAx: f('M8 2L13 5V11L8 14L3 11V5Z', '#b9cbd6', NAVY) + s('M3 5L8 8L13 5M8 8V14', NAVY) + s('M8 0V2M1 13L3 11', RED, 1.5) + s('M13 11L15 13', GRN, 1.5),

  ask: t(4, 13, '?', 15, '#3f6b3a'),
  swap: s('M4 4H14', '#b02a2a', 2) + f('M1 4L6 1V7Z', '#b02a2a') + s('M2 12H12', '#1f6a3a', 2) + f('M15 12L10 9V15Z', '#1f6a3a'),
  gearSwap: c(8, 6, 4.5, '#cfd6e0', '#5b6880') + s('M8 0V2M2 3L4 4M14 3L12 4M2 9L4 8', '#5b6880', 2) + s('M5 8H13', '#b02a2a', 2) + f('M1 8L6 5V11Z', '#b02a2a') + s('M5 13H12', '#1f6a3a', 2) + f('M16 13L11 10V16Z', '#1f6a3a'),
  redCheck: c(8, 7, 6, '#d9a0a0', '#cf9898') + s('M6 9L9 13L15 2', '#6f8a5c', 2) + s('M1 14H6', '#555', 1),
  check: s('M6 8L9 13L15 3', '#4c8a34', 2.5) + s('M1 14.5H6', '#444', 1),

  sideRod: s('M3 4L21 20', '#1f3a55', 4) + s('M3 4L21 20', '#4a7a9c', 1.5),
  sideNode: s('M2 4L22 20', '#1f3a55', 4) + s('M2 4L22 20', '#4a7a9c', 1.5) + c(12, 12, 4, LG, '#4f8a3a'),
  sideLamp: f('M9 8L2 19L11 21L13 10Z', '#fbe36a') + s('M12 6Q20 0 20 8Q18 14 18 21', '#8d949b', 2) + f('M7 9Q7 4 12 4L14 9Z', '#c3262c', '#7c1216') + f('M13 20H21V23H13Z', '#b1181e'),
  sideContour: f('M2 2H22V22H2Z', '#58b8e8', '#223') + f('M2 8Q12 10 13 22H2Z', '#1d3f9a') + f('M13 2Q14 12 22 13V2Z', '#f3f09a') + s('M12 2V22M2 12H22', '#223', 1.5),
  sideHammer: g('scale(1.5)', hammer),
  sideEye: f('M4 12Q12 6 20 12Q12 18 4 12Z', '#d5d9dc', '#999') + c(12, 12, 2.5, '#445', '#667'),
  sideSlider: s('M5 12H22', '#888', 1.5) + f('M2 7H6V17H2Z', '#ddd', '#777'),
  fNum: s('M2 6L20 22', '#1f3a55', 3.5) + c(11, 14, 4, LG, '#4f8a3a') + t(16, 12, '1', 15, '#3a3a8c'),
  fSupport: g('scale(1.5)', support),
  fSpringNo: g('translate(0 -4) scale(1.5 1)', springs) + t(2, 22, '№', 14, '#446'),
  fSpring: g('translate(2 -4) scale(1 1)', springs) + g('translate(0 8) scale(1.5 1)', springs),
  fMove: c(19, 6, 4, LG, '#4f8a3a') + c(4, 20, 3, LG, '#4f8a3a') + s('M8 16L12 12', '#333', 2) + f('M14 10V15L9 10Z', '#333'),
  fAxes: s('M6 12L13 5', '#b02a2a', 2) + f('M17 1L15 8L10 4Z', '#b02a2a') + s('M6 12H18', '#2b3f9c', 2) + f('M22 12L17 9V15Z', '#2b3f9c') + s('M6 12L13 19', GRN, 2) + f('M17 22L15 16L10 21Z', GRN) + c(6, 12, 3.5, LG, '#4f8a3a'),
  fDots: g('scale(1.5)', dots), fDotsNo: g('scale(1.5)', dots) + f('M0 10H17V24H0Z', '#f0f0f0') + t(1, 22, '№', 14, '#446'),
}

// '!' pressed, '~' disabled, trailing '*' has a drop-down
const parse = str => str.split(' ').map(n => ({
  id: n.replace(/[!~*.]/g, ''), on: n[0] === '!', off: n[0] === '~', dd: n.endsWith('*'),
}))

const quick = parse('new* open save undo* redo* cube3d book camera bolt* columns')
const tabs = ['Создание и редактирование', 'Расширенное редактирование', 'Расчет', 'Анализ', 'Расширенный анализ', 'Железобетон', 'Сталь', 'Кирпич']
const menus = ['Файл', 'Режим', 'Вид', 'Выбор', 'Схема', 'Создание', 'Редактирование', 'Жесткости', 'Нагрузки', 'Конструирование', 'Опции', 'Окно', '?']

const groups = [
  { name: 'Создание', items: [
    { big: 'addNode', text: ['Добавить', 'узел'], w: 57, dd: 'in' },
    { big: 'addElem', text: ['Добавить', 'элемент'], w: 56, dd: 'in' },
    { big: 'sapfir', text: ['Создать в', 'САПФИР'], w: 56 },
    { cols: [35, 35, 35, 27], tools: parse('frame* cylinder* dome truss arch cubeMove* mesh* cable building fxy* plane* .') },
  ] },
  { name: 'Редактирование', items: [
    { big: 'copyBig', text: ['Копирование'], w: 88, dd: 'under', key: true },
    { big: 'packBig', text: ['Упаковка', 'схемы'], w: 54 },
    { big: 'moveBig', text: ['Перемещение'], w: 90, dd: 'under', key: true },
    { cols: [35, 26, 28], tools: parse('rotate* cut zoomNodes mirror* scale . slice renum .') },
  ] },
  { name: 'Жесткости и связи', items: [
    { big: 'stiff', text: ['Жесткости'], w: 71, dd: 'under', key: true },
    { cols: [35, 35], tools: parse('springs* block* dots plate support hinge*') },
    { big: 'section', text: ['Конструктор', 'сечений'], w: 70 },
    { cols: [36], tools: parse('rectSec* cc soil') },
    { big: 'rebarSet', text: ['Заданное', 'армирование'], w: 88, dd: 'in' },
  ] },
  { name: 'Конструирование', items: [
    { big: 'hammerBig', text: ['Варианты'], w: 68, key: true },
    { cols: [35], tools: parse('rebarBox* ibeam brick*') },
    { sep: true },
    { big: 'blocks', text: ['Блоки'], w: 46 },
    { cols: [24, 35], tools: parse('!wand tee ropes teeP* releases brickLoad') },
  ] },
  { name: 'Нагрузки', items: [
    { big: 'loadEditBig', text: ['Редактор', 'загружений'], w: 70 },
    { big: 'loads', text: ['Нагрузки'], w: 55, dd: 'under' },
    { cols: [35, 27], tools: parse('weight* copyLoad loadLine* . cutLoad .') },
  ] },
  { name: 'Инструменты', items: [
    { big: 'centre', text: ['Найти', 'центр'], w: 43 },
    { cols: [35, 35, 35], tools: parse('~palPick* ~frac* sigma !palCycle hist* tilesDown palZoom tilesC* tilesPen*') },
  ] },
]

const mainBar = [
  ...parse('frameP arch mesh cyl2 unroll | cut parcel triPlus nodePlus pages pagesR pagesM wrench |'),
  { select: '1. Вариант 1' },
  ...parse('hammer | support springs dots efp ~ask2 !wand ropes releases layers cutNode tilesDown hinge wandT fan tilesC* hist ~palPick | cross pageB ~ghost1 ~ghost2 ~ghost3 | up down'),
  { select: '1. Собственный вес' },
  { id: 'loadEdit' },
]
const bottomBars = [
  parse('star dNode* netRed !dBeam* dVert dHor dRot dGrid* dEF* dPen* columns funnel flip netHook brush | fragX ~fragD fragDn fragRot cage cageRed | mag magX | torch len* pencil markRed'),
  parse('ax1 ax2 axXZ* axXY* axYZ* planeB cw* ax3'),
  parse('iso bTop !bBack bLeft bFrame bRight bFront bBottom isoAx'),
]

const sideTabs = ['sideRod', 'sideNode', 'sideLamp', 'sideContour', 'sideHammer', 'sideEye', 'sideSlider']
const flags = reactive([
  { id: 'fNum', on: false },
  { id: 'fSupport', on: true, slider: true },
  { id: 'fSpringNo', on: false },
  { id: 'fSpring', on: true, slider: true },
  { id: 'fMove', on: false },
  { id: 'fAxes', on: false },
  { id: 'fDots', on: false },
  { id: 'fDotsNo', on: false },
])

// keeps a sloping bar one pixel wide along its main direction
function thin([x1, y1, x2, y2]) {
  const dx = Math.abs(x2 - x1)
  const dy = Math.abs(y2 - y1)
  return Math.max(dx, dy) / Math.hypot(dx, dy)
}

function buildModel() {
  const lines = []
  const nodes = []
  const line = (...a) => lines.push(a)
  const node = (x, ...ys) => ys.forEach(y => nodes.push([x, y]))
  const row = (y, x1, x2, xs) => { line(x1, y, x2, y); xs.forEach(x => nodes.push([x, y])) }
  const bar = (x1, y1, x2, y2) => { line(x1, y1, x2, y2); node(x1, y1); node(x2, y2) }

  // columns
  line(873, 821, 873, 1188); line(971, 831, 971, 1188); line(972, 726, 972, 831); line(1021, 789, 1021, 1188)
  ;[1051, 1130, 1278, 1357].forEach(x => line(x, 252, x, 1188))
  line(1515, 252, 1515, 367)

  // upper storeys
  const deck = [1080, 1108, 1134, 1144, 1159, 1173, 1189, 1219, 1234, 1248, 1264, 1274, 1307]
  row(252, 1051, 1594, [...deck, 1335, 1385, 1414, 1464, 1493, 1543, 1572])
  row(371, 1051, 1515, [...deck, 1335, 1385, 1414, 1464, 1493])
  row(489, 1051, 1436, [...deck, 1335, 1385, 1414])
  row(608, 893, 1357, [915, 943, 994, 1022, ...deck, 1335, 1337])
  for (const [a, b] of [[252, 371], [371, 489], [489, 608], [608, 726]]) {
    const m = a + 63
    node(1051, a + 4, m - 4, m, m + 4, b - 4)
    node(1357, a + 4, b - 4)
    node(1071, m)
    bar(1055, m, 1126, m)
    bar(1127, a + 3, 1074, m - 3)
    bar(1074, m + 3, 1127, b - 3)
    bar(1156, a + 3, 1133, a + 27)
    bar(1202, a + 4, 1132, b - 4)
    bar(1206, a + 4, 1276, b - 4)
    bar(1282, m, 1353, m)
  }
  line(1268, 671, 1278, 671)
  node(1287, 671); node(1289, 671); node(1357, 671)
  bar(1334, 612, 1291, 667); bar(1291, 674, 1334, 723)
  node(1515, 256, 367)
  bar(1592, 256, 1517, 367); bar(1513, 375, 1438, 485); bar(1434, 493, 1359, 604)
  bar(895, 612, 970, 722)

  // decks below
  row(726, 972, 1357, [994, 1022, 1055, 1080, 1108, 1134, 1140, 1144, 1149, 1151, 1159, 1163, 1165, 1168, 1173, 1196, 1223, 1234, 1250, 1264, 1274, 1305, 1330, 1334, 1337])
  row(831, 971, 1386, [971, 975, 994, 1021, 1022, 1055, 1080, 1108, 1112, 1127, 1134, 1140, 1144, 1149, 1159, 1164, 1169, 1173, 1191, 1213, 1234, 1256, 1264, 1274, 1282, 1298, 1317, 1334, 1337, 1353])
  row(904, 873, 1038, [873, 945, 962, 964, 971, 984, 1001, 1018])
  row(904, 1040, 1357, [1077, 1104, 1133, 1144, 1145, 1154, 1159, 1173, 1177, 1204, 1230, 1234, 1254, 1264, 1274, 1282, 1303, 1327, 1335, 1337, 1353])
  row(963, 873, 1038, [873, 903, 907, 940, 944, 971, 998, 1018])
  row(963, 1040, 1357, [1077, 1104, 1134, 1144, 1154, 1173, 1177, 1178, 1224, 1230, 1234, 1250, 1254, 1264, 1274, 1282, 1295, 1296, 1302, 1307, 1308, 1321, 1325, 1329, 1334, 1337, 1353])
  row(1026, 873, 1038, [873, 877, 892, 911, 915, 919, 921, 923, 927, 932, 934, 938, 942, 964, 971, 975, 980, 1001, 1018])
  row(1026, 1040, 1410, [1055, 1068, 1072, 1076, 1077, 1083, 1090, 1091, 1095, 1099, 1114, 1126, 1134, 1144, 1149, 1154, 1167, 1173, 1177, 1188, 1204, 1210, 1230, 1232, 1234, 1254, 1264, 1274, 1282, 1292, 1296, 1302, 1307, 1311, 1321, 1325, 1334, 1337, 1353, 1361, 1380, 1384, 1388, 1406])
  row(1095, 873, 1038, [873, 896, 915, 935, 955, 971, 982, 1002, 1018])
  row(1109, 1040, 1377, [1078, 1103, 1134, 1144, 1149, 1154, 1162, 1167, 1173, 1177, 1188, 1208, 1210, 1230, 1232, 1234, 1254, 1264, 1274, 1282, 1295, 1296, 1302, 1307, 1308, 1321, 1325, 1334, 1337, 1353])

  // left bay ladder
  const decks = [831, 904, 963, 1026, 1095]
  const rungs = [868, 933, 994, 1060, 1135]
  decks.forEach((y, i) => {
    const r = rungs[i]
    row(r, 971, 1021, [971, 975, 1018, 1021])
    bar(999, y + 4, 999, r - 4); bar(1016, y + 4, 1016, r - 4)
    for (const x of [971, 1021]) {
      node(x, y, y + 4, r - 4, r + 4)
      if (i) node(x, y - 4)
    }
    if (i) node(873, y - 4, y + 4)
    if (decks[i + 1]) { bar(976, r + 4, 976, decks[i + 1] - 4); bar(994, r + 4, 994, decks[i + 1] - 4) }
  })
  bar(975, 834, 1049, 901)
  ;[904, 963, 1026, 1109].forEach(y => { for (const x of [1051, 1130, 1357]) node(x, y - 4, y, y + 4) })
  node(1051, 730, 769, 777, 827, 835)
  node(1130, 835, 863, 871, 929, 937, 990, 998, 1063, 1071)
  node(1357, 730, 827, 835, 868, 886, 929, 939, 1061, 1063, 1135)
  node(1278, 831, 835, 868, 908, 929, 930, 1030, 1061, 1062, 1109, 1135)
  ;[873, 971, 1021, 1051, 1130, 1357].forEach(x => node(x, 1171))
  node(873, 825); node(1021, 793)

  // bay 1051-1130
  line(1055, 773, 1130, 773); node(1055, 773); node(1071, 773)
  bar(1127, 729, 1074, 770); bar(1074, 776, 1127, 828)
  bar(1156, 729, 1133, 753)

  // central bracing
  bar(1133, 730, 1201, 827); bar(1275, 730, 1207, 827)
  bar(1201, 834, 1133, 901); bar(1207, 834, 1275, 901)
  bar(1133, 907, 1201, 960); bar(1275, 907, 1207, 960)
  bar(1201, 966, 1133, 1023); bar(1207, 966, 1275, 1023)
  bar(1133, 1029, 1201, 1106); bar(1275, 1029, 1207, 1106)
  bar(1201, 1112, 1133, 1172); bar(1207, 1112, 1275, 1172)
  bar(1157, 1112, 1133, 1136)

  // right bay
  row(778, 1278, 1357, [1282, 1298]); bar(1334, 730, 1301, 774); bar(1301, 782, 1334, 827)
  row(868, 1282, 1353, [1282, 1298, 1353]); bar(1334, 834, 1301, 865); bar(1301, 871, 1334, 901)
  row(929, 1278, 1357, [1282, 1298, 1353]); bar(1333, 906, 1302, 927); bar(1301, 932, 1334, 960); bar(1281, 907, 1314, 940)
  row(943, 1278, 1357, [1282, 1292, 1294, 1302, 1309, 1311, 1317, 1323, 1327, 1337, 1353])
  row(990, 1278, 1357, [1298]); bar(1333, 966, 1302, 987); bar(1301, 993, 1334, 1023)
  bar(1334, 1029, 1301, 1055); row(1058, 1257, 1357, [])
  bar(1260, 1061, 1275, 1076); bar(1281, 1061, 1334, 1106)
  line(1298, 1058, 1298, 1109); node(1298, 1062, 1076)
  row(1135, 1282, 1353, [1282, 1298, 1353]); bar(1333, 1111, 1302, 1133)
  bar(1383, 834, 1360, 857); bar(1407, 1029, 1360, 1076); bar(1374, 1112, 1360, 1126)
  line(1302, 831, 1302, 844); line(927, 904, 927, 917); line(903, 1026, 903, 1040)

  // roof
  line(873, 821, 1040, 785); line(900, 816, 1020, 790)
  ;[[873, 821], [877, 820], [904, 814], [912, 812], [942, 806], [946, 805], [978, 799], [986, 797], [1018, 790], [1021, 789]].forEach(n => nodes.push(n))
  const loads = [[882, 811, 10], [908, 805, 5], [908, 811, 5], [934, 800, 10], [960, 794, 5], [960, 800, 5], [986, 789, 10], [1012, 783, 5], [1012, 789, 5], [1025, 781, 10], [1038, 778, 10]]
  return { lines, nodes, loads, supports: [873, 971, 1021, 1051, 1130, 1278, 1357] }
}
const model = buildModel()
</script>

<style>
body { margin: 0; }
</style>

<style scoped>
.app { position: relative; display: flex; flex-direction: column; min-height: 100vh; background: #535353; font: 11px/13px 'Noto Sans', sans-serif; color: #000; }
.app * { box-sizing: border-box; }
svg { overflow: visible; }
button { margin: 0; padding: 0; border: 0; background: none; font: inherit; color: inherit; flex: none; }
select, input { font: inherit; margin: 0; }
.ico { display: block; width: 16px; height: 16px; }
.tool { display: flex; align-items: center; justify-content: center; width: 22px; height: 22px; }
.tool.on, .dd.on { background: linear-gradient(#fbd8a0, #f7b65c 50%, #fde08c); box-shadow: inset 0 0 0 1px #d8a860; }
.tool.off svg { opacity: .5; }
.dd { display: flex; align-items: center; justify-content: center; width: 12px; height: 22px; }
.tri { display: block; width: 0; height: 0; border: 3px solid transparent; border-top-color: #444; border-bottom: 0; }

.titlebar { display: flex; align-items: center; height: 24px; background: #fff; padding-left: 63px; }
.quick { display: flex; align-items: center; }
.quick .dd { width: 11px; }
.quick .more { flex-direction: column; gap: 2px; margin-left: 14px; }
.quick .bar { width: 6px; height: 1px; background: #444; }
h1 { flex: 1; margin: 0; font-size: 11px; line-height: 16px; font-weight: 600; text-align: center; padding-left: 40px; }
.winbtns { display: flex; }
.winbtns button { width: 46px; height: 24px; display: flex; align-items: center; justify-content: center; }

.logo { position: absolute; left: 11px; top: 4px; width: 38px; height: 38px; z-index: 2; }
.logo svg { display: block; width: 38px; height: 38px; }

.tabs { display: flex; align-items: flex-end; height: 22px; padding-left: 63px; color: #fff; }
.tabs > button { height: 21px; padding: 2px 15px 0; }
.tabs > button.on { margin-right: 5px; color: #000; background: linear-gradient(#fdfdfe, #d5d9e0); border-radius: 3px 3px 0 0; box-shadow: inset 0 0 0 1px #c5e6ea; }
.tabs-right { margin-left: auto; display: flex; align-items: center; height: 22px; gap: 9px; padding-right: 1px; }
.tabs-right button { display: flex; align-items: center; gap: 9px; }
.tabs-right .mdi { width: 16px; margin-right: -6px; }
.tabs-right .mdi:last-child { margin-right: 0; }
.help b { font-size: 17px; color: #3f5c9c; text-shadow: 0 0 1px #16264f; }
.chev { width: 4px; height: 4px; border: solid #ddd; border-width: 0 1px 1px 0; transform: rotate(45deg); }
.chev.ink { width: 6px; height: 6px; border-color: #444; }

.ribbon { display: flex; gap: 3px; height: 90px; padding: 4px 5px 2px; background: linear-gradient(#d8dbe2, #c8ccd5 16px, #b3b9c5 17px, #d5dde2 60px, #e6efef); border: solid #c3c6cb; border-width: 1px 0 2px; border-top-color: #8c8f94; }
.group { display: flex; flex-direction: column; flex: none; height: 84px; border: 1px solid #9a9fa6; border-top-color: #c0c4ca; border-radius: 3px; box-shadow: inset 0 0 0 1px #ffffff80; }
.group-body { display: flex; flex: 1; padding: 0 2px; }
.group footer { height: 16px; line-height: 15px; text-align: center; color: #fff; background: linear-gradient(#b3b6b6, #8d8f8f); border-radius: 0 0 2px 2px; }
.big { display: flex; flex-direction: column; align-items: center; padding-top: 4px; justify-content: flex-start; }
.big svg { width: 32px; height: 32px; margin-bottom: 3px; }
.big span { display: flex; align-items: center; white-space: pre; }
.tri.in { margin-left: 3px; }
.tri.under { margin-top: 5px; }
.small { display: grid; grid-auto-rows: 22px; }
.cell { display: flex; }
.gsep { width: 7px; margin: 7px 0 6px; border-left: 1px solid #f0f2f4; box-shadow: -1px 0 #a0a5ad; }

.menubar { display: flex; align-items: center; height: 27px; padding: 2px 0 0 3px; color: #fff; gap: 15px; }
.grip { width: 2px; height: 14px; margin-right: -4px; background: repeating-linear-gradient(#ddd 0 2px, transparent 2px 4px); }
.grip.dark { margin: 0 3px 0 4px; background: repeating-linear-gradient(#333 0 2px, #eee 2px 4px); }
.bottom .grip.dark { margin-right: 4px; }

.bars { display: flex; height: 25px; }
.bars.bottom { height: 26px; margin-top: 2px; }
.bar-strip { display: flex; align-items: center; height: 25px; border-radius: 3px; background: linear-gradient(#d2d5db, #b3b8c1 50%, #9ba1ab); }
.bars .split { width: 24px; }
.bars .dd { width: 11px; }
.sep { width: 2px; height: 14px; margin: 0 3px; background: linear-gradient(90deg, #555 50%, #ddd 50%); }
.tail { display: flex; align-items: flex-end; justify-content: center; width: 10px; height: 25px; margin-left: 3px; padding-bottom: 5px; border-radius: 0 3px 3px 0; background: linear-gradient(#a3a7af, #5b6069); }
.tail .tri { border-top-color: #fff; }
.pick { position: relative; display: block; width: 124px; height: 19px; margin: 0 3px; }
.pick select { appearance: none; width: 100%; height: 100%; padding: 0 14px 0 5px; border: 0; border-radius: 0; background: #fff; color: #000; overflow: hidden; }
.pick .tri { position: absolute; right: 1px; top: 1px; width: 14px; height: 17px; border: 0; background: #c3c7cf; pointer-events: none; }
.pick .tri::after { content: ''; position: absolute; left: 4px; top: 7px; border: 3px solid transparent; border-top-color: #444; border-bottom: 0; }

.canvas { position: relative; flex: 1; min-height: 680px; margin-top: 2px; background: #fff; border: solid #6e6e6e; border-width: 1px 1px 0; }
.model { display: block; position: absolute; inset: 0; width: 100%; height: 100%; }
.axis { font: bold 15px 'DejaVu Sans', sans-serif; }
.loadcase { position: absolute; left: 4px; top: 3px; font: 12px/14px 'Liberation Serif', serif; }

.panel { position: absolute; top: 0; right: 0; width: 145px; background: #f0f0f0; border: 1px solid #a0a0a0; border-right: 0; box-shadow: 0 4px 10px #0003; padding-bottom: 4px; }
.panel > header { display: flex; align-items: center; justify-content: space-between; height: 29px; padding: 0 5px 0 8px; background: #fff; color: #999; }
.flags { display: flex; height: 458px; margin: 3px; padding: 3px; border: 1px solid #707070; box-shadow: inset 1px 1px #a8a8a8; }
.side { width: 30px; }
.side button { display: flex; align-items: center; justify-content: center; width: 30px; height: 40px; margin-bottom: 2px; background: #fff; border: 1px solid #e0e0e0; border-right: 0; border-bottom: 1px solid #666; border-radius: 2px; }
.side button.on { background: #f0f0f0; height: 42px; margin: -2px 0 2px -2px; }
.side svg { width: 22px; height: 22px; }
fieldset { margin: 0; padding: 0; border: 1px solid #dcdcdc; min-width: 0; }
legend { padding: 0 3px; line-height: 13px; }
.nodes { flex: 1; padding: 0 0 0 3px; border-bottom-color: #888; }
.nodes legend { margin-left: 5px; }
.flag { display: flex; align-items: center; height: 33px; }
.flag label { margin: 6px 5px 0 6px; }
.flag svg { display: block; width: 24px; height: 24px; }
input[type='checkbox'] { appearance: none; flex: none; width: 13px; height: 13px; border: 1px solid #222; background: #fff; position: relative; }
input[type='checkbox']:checked::after { content: ''; position: absolute; left: 3px; top: 0; width: 4px; height: 8px; border: solid #222; border-width: 0 1px 1px 0; transform: rotate(45deg); }
input[type='range'] { appearance: none; width: 43px; height: 15px; padding: 0 5px; border: 1px solid #888; border-color: #888 #fff #fff #888; background: linear-gradient(#d6d6d6, #d6d6d6) 6px 5px / 30px 3px no-repeat; }
input[type='range']::-webkit-slider-thumb { appearance: none; width: 4px; height: 8px; background: #0078d7; }
.prow { display: flex; align-items: center; gap: 11px; }
.prow.top { justify-content: flex-end; gap: 5px; padding: 1px 3px 2px 0; border-top: 1px solid #888; }
.box { display: flex; align-items: center; gap: 3px; padding: 2px; border: 1px solid #dcdcdc; }
.top .box { padding-right: 5px; gap: 4px; }
.pb { display: flex; align-items: center; justify-content: center; width: 28px; height: 21px; background: #e1e1e1; border: 1px solid #adadad; }
.pb.dim { background: #cfcfcf; border-color: #bfbfbf; }
.pb svg { width: 16px; height: 16px; }
.sets { padding: 2px 2px 1px; }
.sets legend { margin-left: 5px; }
.sets .prow { padding: 3px 0 0 10px; gap: 9px; }
.combo { position: relative; display: block; }
.combo select { display: block; appearance: none; width: 138px; height: 21px; border: 1px solid #7a7a7a; border-radius: 0; background: #fff; }
.combo .chev { position: absolute; right: 7px; top: 6px; pointer-events: none; }
.apply { margin-top: 5px; }
.apply legend { padding: 0; margin-left: 2px; white-space: nowrap; }
.agrid { display: grid; grid-template-columns: 28px 52px 28px; column-gap: 9px; row-gap: 1px; padding: 0 0 0 11px; align-items: center; }
.agrid > .pb:nth-child(5) { margin-left: 3px; }

.errors { margin-top: 5px; background: #fff; }
.errors header { display: flex; align-items: center; height: 22px; padding: 0 1px 0 4px; background: #9d9f9e; color: #3c3c3c; border-top: 1px solid #ccc; border-bottom: 1px solid #5e5e5e; }
.errors header span { flex: 1; }
.errors header button { margin-left: 1px; }
table { width: 100%; border-collapse: collapse; table-layout: fixed; border-left: 1px solid #777; }
.c1 { width: 38.5%; } .c2 { width: 24.46%; } .c3 { width: 10.35%; } .c4 { width: 26%; }
th { height: 24px; padding: 0 6px; font: 11px/13px Roboto, sans-serif; text-align: center; border-right: 1px solid #e4e4e4; }
th.l { text-align: left; } th.r { text-align: right; }
td { height: 17px; padding: 0; border: solid #ececec; border-width: 0 1px 1px 0; }

.status { display: flex; align-items: flex-end; height: 22px; background: linear-gradient(#414552, #363945 8px, #2e2e2d 8px); padding-left: 3px; }
.flag-ru { width: 16px; height: 12px; margin-bottom: 3px; }
.cells { margin-left: auto; display: flex; align-items: flex-end; height: 21px; border-left: 2px solid #111; padding-left: 5px; background: linear-gradient(#c5c5c6, #a0a0a1 50%, #868687 51%, #9a9b9b); }
.cells button { width: 24px; height: 19px; display: flex; align-items: center; justify-content: center; background: #cfd8d9; }
.cells .pick { width: 54px; margin: 0; height: 19px; }
.cells .pick select { background: #e8e8e8; padding: 0 4px; }
.cells .pick .tri { background: none; }
.cut { width: 2px; height: 19px; margin: 0 3px; background: #333; }
.info { width: 133px; height: 19px; line-height: 18px; padding-left: 4px; border-left: 2px solid #333; margin-left: 1px; }
.cells .info.last { width: 83px; margin-left: 0; }
</style>
